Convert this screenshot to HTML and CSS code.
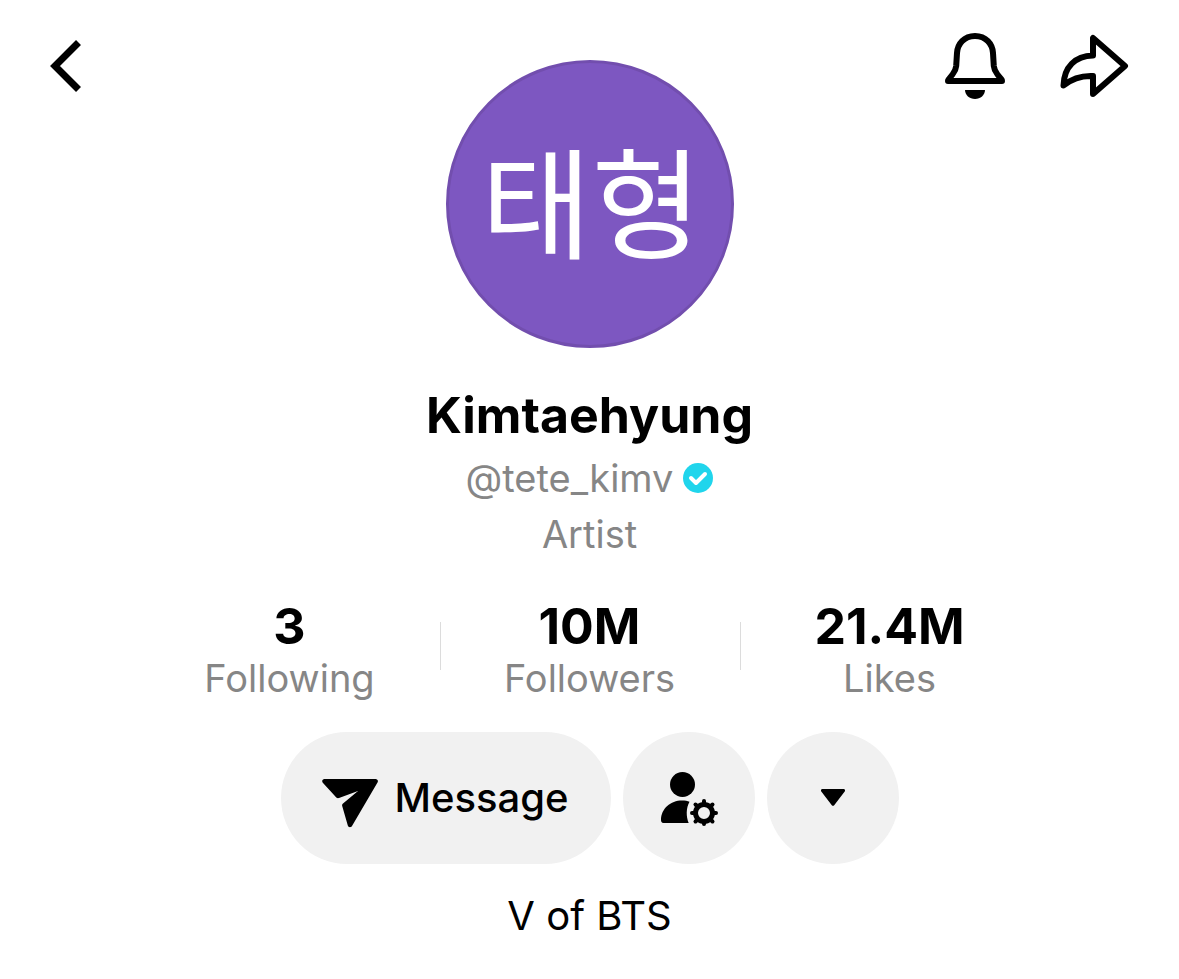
FILE: index.html
```html
<!DOCTYPE html>
<html lang="en">
<head>
  <meta charset="UTF-8">
  <meta name="viewport" content="width=device-width, initial-scale=1.0">
  <title>Kimtaehyung (@tete_kimv)</title>
  <link rel="stylesheet" href="styles.css">
</head>
<body>
  <header class="top">
    <button class="icon-btn" type="button" aria-label="Back">
      <svg width="36" height="72" viewBox="0 0 36 72" fill="none" stroke="#000" stroke-width="7">
        <path d="M28.500 12.500L5 36l23.500 23.500"/>
      </svg>
    </button>
    <div class="avatar" lang="ko">태형</div>
    <div class="actions">
      <button class="icon-btn" type="button" aria-label="Notifications">
        <svg width="64" height="72" viewBox="0 0 64 72" fill="none" stroke="#000" stroke-width="6" stroke-linejoin="round">
          <path d="M32 6C21 6 14.500 14 14 23l-.8 13c-.3 3.500-1.700 6-3.700 8.500l-4 5c-.5.600-.5 1-.5 1.500h54c0-.5 0-.9-.5-1.500l-4-5c-2-2.500-3.400-5-3.700-8.500L50 23C49.500 14 43 6 32 6z"/>
          <path d="M22 60h20c0 5-4.500 9-10 9s-10-4-10-9z" fill="#000" stroke="none"/>
        </svg>
      </button>
      <button class="icon-btn" type="button" aria-label="Share">
        <svg width="72" height="72" viewBox="0 0 72 72" fill="none" stroke="#000" stroke-width="6" stroke-linejoin="round">
          <path d="M36 8v17.500C18 26 7 37 6.500 55.500 15 48.500 25 45.500 36 46v18l32-28z"/>
        </svg>
      </button>
    </div>
  </header>

  <main class="profile">
    <h1 class="name">Kimtaehyung</h1>
    <div class="handle">
      <span>@tete_kimv</span>
      <svg width="30" height="30" viewBox="0 0 30 30" role="img" aria-label="Verified">
        <circle cx="15" cy="15" r="15" fill="#20d5ec"/>
        <path d="M8 15l5 5 9-9" fill="none" stroke="#fff" stroke-width="4" stroke-linecap="round" stroke-linejoin="round"/>
      </svg>
    </div>
    <div class="category">Artist</div>

    <div class="stats">
      <a class="stat" href="#following"><strong>3</strong><span>Following</span></a>
      <a class="stat" href="#followers"><strong>10M</strong><span>Followers</span></a>
      <a class="stat" href="#likes"><strong>21.4M</strong><span>Likes</span></a>
    </div>

    <div class="buttons">
      <button class="btn btn-message" type="button">
        <svg width="56" height="60" viewBox="0 -10 56 60">
          <path d="M2.500 1h51c2 0 3 1.800 2 3.500L30 48c-1 1.700-3.600 1.600-4.200-.5l-5.600-19.500c-.3-1 0-1.800.8-2.500L36 13 17 20c-1 .3-2 .1-2.700-.6L.8 4.700C-.5 3.200.5 1 2.500 1z"/>
        </svg>
        Message
      </button>
      <button class="btn btn-round" type="button" aria-label="Manage following">
        <svg width="58" height="56" viewBox="0 -1 58 56">
          <circle cx="22.500" cy="13.500" r="12.500"/>
          <path d="M22 29.500c3 0 5.500.3 7.500 1.200-3.500 6.500-3.500 14.500-.8 21.300H3.500C1.500 52 1 50.500 1 49c.2-11.500 9.500-19.500 21-19.500z"/>
          <circle cx="44" cy="42" r="8.500" fill="none" stroke="#000" stroke-width="5"/>
          <path d="M44 30v3M44 51v2M32 42h3M53 42h3M35.500 33.500l2 2M50.500 48.500l2 2M52.500 33.500l-2 2M37.500 48.500l-2 2" fill="none" stroke="#000" stroke-width="4" stroke-linecap="round"/>
        </svg>
      </button>
      <button class="btn btn-round" type="button" aria-label="Suggested accounts">
        <svg width="24" height="18" viewBox="0 0 24 18">
          <path d="M1.500 0h21c1.300 0 2 1.500 1.200 2.500L13.200 16.200c-.6.800-1.800.8-2.400 0L.3 2.500C-.5 1.500.2 0 1.500 0z"/>
        </svg>
      </button>
    </div>

    <p class="bio">V of BTS</p>
  </main>
</body>
</html>
```
FILE: styles.css
```css
* {
  box-sizing: border-box;
}

body {
  margin: 0;
  background: #fff;
  color: #000;
  font-family: Inter, "Noto Sans CJK KR", sans-serif;
  font-size: 38px;
  line-height: 56px;
}

button {
  border: 0;
  padding: 0;
  background: none;
  color: inherit;
  font: inherit;
  cursor: pointer;
}

svg {
  display: block;
  flex: none;
}

.top {
  display: grid;
  grid-template-columns: 1fr auto 1fr;
  align-items: start;
  padding: 30px 50px 0;
}

.icon-btn {
  justify-self: start;
}

.avatar {
  display: flex;
  align-items: center;
  justify-content: center;
  width: 288px;
  height: 288px;
  margin-top: 30px;
  padding: 0 0 12px 4px;
  border: 3px solid #724eae;
  border-radius: 50%;
  background: #7d57c1;
  color: #fff;
  font-family: "Noto Sans CJK KR", sans-serif;
  font-size: 120px;
  line-height: 1;
}

.actions {
  display: flex;
  justify-content: flex-end;
  gap: 50px;
}

.profile {
  display: flex;
  flex-direction: column;
  align-items: center;
  padding-top: 37px;
}

.name {
  margin: 0 0 5px;
  font-size: 50px;
  font-weight: 700;
  line-height: 60px;
}

.handle {
  display: flex;
  align-items: center;
  gap: 10px;
}

.handle,
.category,
.stat span {
  color: #868686;
}

.stats {
  display: grid;
  grid-template-columns: repeat(3, 300px);
  margin-top: 36px;
}

.stat {
  position: relative;
  display: flex;
  flex-direction: column;
  align-items: center;
  color: inherit;
  text-decoration: none;
}

.stat + .stat::before {
  content: "";
  position: absolute;
  top: 24px;
  left: 0;
  width: 1px;
  height: 48px;
  background: #dcdcdc;
}

.stat strong {
  font-size: 50px;
  font-weight: 700;
  line-height: 56px;
}

.stat span {
  line-height: 48px;
}

.buttons {
  display: flex;
  gap: 12px;
  margin-top: 30px;
}

.btn {
  display: flex;
  align-items: center;
  justify-content: center;
  height: 132px;
  border-radius: 66px;
  background: #f1f1f1;
}

.btn-message {
  gap: 16px;
  width: 330px;
  font-size: 40px;
  font-weight: 500;
}

.btn-round {
  width: 132px;
}

.bio {
  margin: 24px 0 0;
  font-size: 40px;
}
```
